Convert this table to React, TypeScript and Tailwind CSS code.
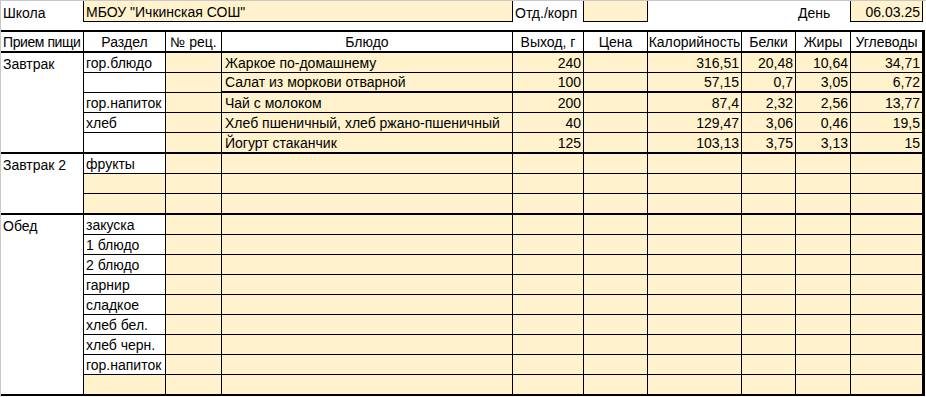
import clsx from "clsx";

type Row = {
  razdel?: string;
  razdelBeige?: boolean;
  dish?: string;
  out?: string;
  kcal?: string;
  b?: string;
  j?: string;
  u?: string;
  thick?: boolean;
};

type Group = { name: string; rows: Row[] };

const groups: Group[] = [
  {
    name: "Завтрак",
    rows: [
      { razdel: "гор.блюдо", dish: "Жаркое по-домашнему", out: "240", kcal: "316,51", b: "20,48", j: "10,64", u: "34,71" },
      { dish: "Салат из моркови отварной", out: "100", kcal: "57,15", b: "0,7", j: "3,05", u: "6,72", thick: true },
      { razdel: "гор.напиток", dish: "Чай с молоком", out: "200", kcal: "87,4", b: "2,32", j: "2,56", u: "13,77" },
      { razdel: "хлеб", dish: "Хлеб пшеничный, хлеб ржано-пшеничный", out: "40", kcal: "129,47", b: "3,06", j: "0,46", u: "19,5" },
      { dish: "Йогурт стаканчик", out: "125", kcal: "103,13", b: "3,75", j: "3,13", u: "15" },
    ],
  },
  {
    name: "Завтрак 2",
    rows: [{ razdel: "фрукты" }, { razdelBeige: true }, { razdelBeige: true }],
  },
  {
    name: "Обед",
    rows: [
      { razdel: "закуска" },
      { razdel: "1 блюдо" },
      { razdel: "2 блюдо" },
      { razdel: "гарнир" },
      { razdel: "сладкое" },
      { razdel: "хлеб бел." },
      { razdel: "хлеб черн." },
      { razdel: "гор.напиток" },
      { razdelBeige: true },
    ],
  },
];

// widths of columns 2..10 (right border included)
const COLS = [
  "w-[82px]",
  "w-[56px]",
  "w-[291px]",
  "w-[71px]",
  "w-[64px]",
  "w-[94px]",
  "w-[54px]",
  "w-[55px]",
  "w-[71px]",
];

const HEADERS = ["Раздел", "№ рец.", "Блюдо", "Выход, г", "Цена", "Калорийность", "Белки", "Жиры", "Углеводы"];

function Cell({
  w,
  className,
  children,
  align = "left",
}: {
  w: string;
  className?: string;
  children?: React.ReactNode;
  align?: "left" | "right" | "center";
}) {
  return (
    <div
      className={clsx(
        "shrink-0 h-full flex items-end px-[2px] pb-[1px] leading-[16px] whitespace-nowrap overflow-hidden",
        align === "right" && "justify-end",
        align === "center" && "justify-center",
        w,
        className
      )}
    >
      {children}
    </div>
  );
}

function DataRow({ row, last }: { row: Row; last: boolean }) {
  const b = last ? "" : "border-b";
  const bDish = last ? "" : row.thick ? "border-b-2" : "border-b";
  const values = [row.dish, row.out, "", row.kcal, row.b, row.j, row.u];
  return (
    <div className={clsx("flex", last ? "h-[19px]" : "h-[20px]")}>
      <Cell w={COLS[0]} className={clsx("border-r border-black", b, row.razdelBeige ? "bg-[#fff2cc]" : "bg-white")}>
        {row.razdel}
      </Cell>
      <Cell w={COLS[1]} className={clsx("border-r border-black bg-[#fff2cc]", b)} />
      {values.map((v, i) => (
        <Cell
          key={i}
          w={COLS[i + 2]}
          align={i === 0 ? "left" : "right"}
          className={clsx(
            "border-black bg-[#fff2cc]",
            i === 0 && "pl-[3px]",
            i < 6 && "border-r",
            bDish
          )}
        >
          {v}
        </Cell>
      ))}
    </div>
  );
}

export default function App() {
  return (
    <div className="w-[926px] h-[397px] overflow-hidden bg-white border-l border-t border-[#c8c8c8] text-black text-[14px] font-['Liberation_Sans',Arial,sans-serif]">
      {/* top line: school and date */}
      <div className="flex h-[21px]">
        <Cell w="w-[83px]" className="border-r border-black">
          Школа
        </Cell>
        <Cell w="w-[429px]" className="border-r border-b border-black bg-[#fff2cc]">
          МБОУ "Ичкинская СОШ"
        </Cell>
        <Cell w="w-[71px]" className="border-r border-black">
          Отд./корп
        </Cell>
        <Cell w="w-[64px]" className="border-r border-b border-black bg-[#fff2cc]" />
        <Cell w="w-[94px]" />
        <Cell w="w-[54px]" />
        <Cell w="w-[55px]" className="border-r border-black">
          День
        </Cell>
        <Cell w="w-[72px]" align="right" className="border-r border-b border-black bg-[#fff2cc]">
          06.03.25
        </Cell>
      </div>

      <div className="mt-[8px] w-[924px] border-r-[3px] border-black">
        {/* header */}
        <div className="flex h-[23px] border-y-2 border-black">
          <Cell w="w-[83px]" className="border-r border-black tracking-[-0.03em]">
            Прием пищи
          </Cell>
          {HEADERS.map((h, i) => (
            <Cell key={h} w={COLS[i]} align="center" className={clsx("border-black px-0", i < 8 && "border-r")}>
              {h}
            </Cell>
          ))}
        </div>

        {groups.map((g) => (
          <div key={g.name} className="flex border-b-2 border-black">
            <div className="w-[83px] shrink-0 border-r border-black">
              <div className="h-[20px] flex items-end px-[2px] pb-[1px] leading-[16px] whitespace-nowrap">
                {g.name}
              </div>
            </div>
            <div className="flex flex-col">
              {g.rows.map((r, i) => (
                <DataRow key={i} row={r} last={i === g.rows.length - 1} />
              ))}
            </div>
          </div>
        ))}
      </div>
    </div>
  );
}
